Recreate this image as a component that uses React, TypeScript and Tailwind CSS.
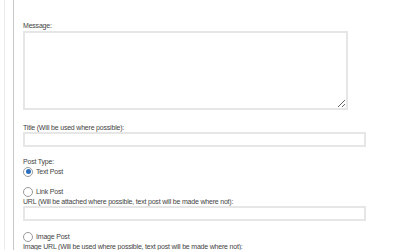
const Radio: React.FC<{ label: string; checked?: boolean }> = ({ label, checked }) => {
  return (
    <div className="flex items-center gap-[3px] h-[11px]">
      <span className="flex items-center justify-center w-[10px] h-[10px] rounded-full border border-[#9a9a9a] bg-white">
        {checked && <span className="w-[5px] h-[5px] rounded-full bg-[#2b6fc2]" />}
      </span>
      <span>{label}</span>
    </div>
  );
};

export default function App() {
  return (
    <div
      className="w-[400px] h-[250px] overflow-hidden bg-white flex text-[7px] leading-[9px] tracking-[-0.2px] text-[#444]"
      style={{ fontFamily: '"Liberation Sans", Arial, sans-serif' }}
    >
      <div className="w-[4px] shrink-0" />
      <div className="w-[9px] shrink-0 border-l border-[#ececec]" />
      <div className="flex-1 border-l border-[#c8c8c8] pl-[9px] pt-[21px]">
        <div>Message:</div>
        <textarea className="block mt-[1px] w-[325px] h-[79px] border-2 border-[#e6e6e6] outline-none resize" />

        <div className="mt-[13px]">Title (Will be used where possible):</div>
        <div className="w-[343px] h-[15px] border-2 border-[#e6e6e6]" />

        <div className="mt-[10px]">Post Type:</div>
        <Radio label="Text Post" checked />

        <div className="mt-[9px]">
          <Radio label="Link Post" />
        </div>
        <div>URL (Will be attached where possible, text post will be made where not):</div>
        <div className="w-[343px] h-[15px] border-2 border-[#e6e6e6]" />

        <div className="mt-[10px]">
          <Radio label="Image Post" />
        </div>
        <div>Image URL (Will be used where possible, text post will be made where not):</div>
      </div>
    </div>
  );
}
